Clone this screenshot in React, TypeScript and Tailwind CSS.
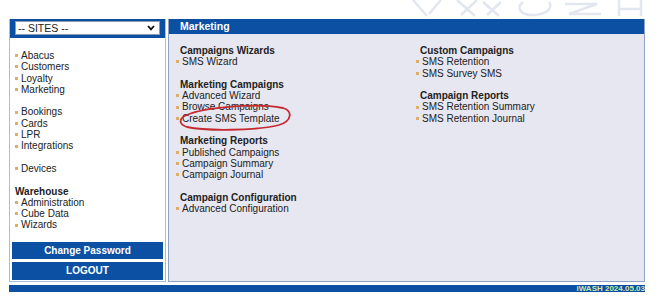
import React from 'react'

const blue = 'bg-[#0c50a3]'

const sideGroups: { title?: string; items: string[] }[] = [
  { items: ['Abacus', 'Customers', 'Loyalty', 'Marketing'] },
  { items: ['Bookings', 'Cards', 'LPR', 'Integrations'] },
  { items: ['Devices'] },
  { title: 'Warehouse', items: ['Administration', 'Cube Data', 'Wizards'] },
]

const leftCol: { title: string; items: string[] }[] = [
  { title: 'Campaigns Wizards', items: ['SMS Wizard'] },
  { title: 'Marketing Campaigns', items: ['Advanced Wizard', 'Browse Campaigns', 'Create SMS Template'] },
  { title: 'Marketing Reports', items: ['Published Campaigns', 'Campaign Summary', 'Campaign Journal'] },
  { title: 'Campaign Configuration', items: ['Advanced Configuration'] },
]

const rightCol: { title: string; items: string[] }[] = [
  { title: 'Custom Campaigns', items: ['SMS Retention', 'SMS Survey SMS'] },
  { title: 'Campaign Reports', items: ['SMS Retention Summary', 'SMS Retention Journal'] },
]

function Item({ label }: { label: string }) {
  return (
    <div className="flex items-center gap-[3px]">
      <span className="h-[3px] w-[3px] shrink-0 bg-[#dcae6a]" />
      <span>{label}</span>
    </div>
  )
}

function Section({ title, items }: { title: string; items: string[] }) {
  return (
    <div className="flex flex-col">
      <div className="pl-[4px] font-bold">{title}</div>
      {items.map((i) => (
        <Item key={i} label={i} />
      ))}
    </div>
  )
}

export default function App() {
  return (
    <div className="relative h-[304px] w-[661px] overflow-hidden bg-white pl-[9px] pt-[19px] font-['Liberation_Sans',Arial,sans-serif] text-[10px] leading-[11.3px] text-[#222]">
      {/* faint logo watermark */}
      <svg className="absolute left-[405px] top-0" width="240" height="18" viewBox="0 0 240 18" fill="none" stroke="#e1e6ef" strokeWidth="2.5">
        <path d="M8 0 L22 16 M36 0 L24 14" />
        <path d="M52 0 L70 16 M72 0 L56 15 M78 2 L94 16 M96 2 L82 15" />
        <path d="M118 2 C110 8 116 16 130 15 C142 14 148 8 144 2" />
        <path d="M160 4 L192 4 L164 14 L196 14" />
        <path d="M214 0 L214 16 M236 0 L236 16 M214 9 L236 9" />
      </svg>

      <div className="flex w-[636px] flex-col">
        <div className="flex h-[263px] gap-[2px]">
          {/* sidebar */}
          <aside className="flex w-[157px] flex-col border border-t-0 border-[#a9bedb] bg-white">
            <div className={`${blue} px-[5px] pb-[3px] pt-[2px]`}>
              <div className="flex h-[14px] items-center justify-between border border-[#8a9bb3] bg-white pl-[2px] pr-[4px] text-[10.5px] leading-none">
                <span>-- SITES --</span>
                <svg width="8" height="6" viewBox="0 0 8 6" fill="none" stroke="#111" strokeWidth="1.8">
                  <path d="M1 1 L4 4.3 L7 1" />
                </svg>
              </div>
            </div>
            <div className="flex flex-1 flex-col gap-[11.3px] pl-[5px] pt-[12px]">
              {sideGroups.map((g, i) => (
                <div key={i} className="flex flex-col">
                  {g.title && <div className="font-bold">{g.title}</div>}
                  {g.items.map((it) => (
                    <Item key={it} label={it} />
                  ))}
                </div>
              ))}
            </div>
            <div className="flex flex-col gap-[3px] px-[1px] pb-[1px]">
              <div className={`${blue} flex h-[17px] items-center justify-center border-x border-white font-bold text-white`}>Change Password</div>
              <div className={`${blue} flex h-[18px] items-center justify-center border-x border-white font-bold text-white`}>LOGOUT</div>
            </div>
          </aside>

          {/* main */}
          <main className="relative flex flex-1 flex-col border border-t-0 border-[#8fa3c2] bg-[#e7e7f1]">
            <div className={`${blue} h-[15px] pl-[11px] text-[10.5px] font-bold leading-[15px] text-white`}>Marketing</div>
            <div className="flex pl-[7px] pt-[11px]">
              <div className="flex w-[240px] flex-col gap-[11.3px]">
                {leftCol.map((s) => (
                  <Section key={s.title} {...s} />
                ))}
              </div>
              <div className="flex flex-col gap-[11.3px]">
                {rightCol.map((s) => (
                  <Section key={s.title} {...s} />
                ))}
              </div>
            </div>
            {/* red annotation ellipse */}
            <svg className="pointer-events-none absolute left-[6px] top-[84px]" width="120" height="30" viewBox="0 0 120 30" fill="none">
              <path
                d="M12 12 C30 4 80 0 108 5 C118 8 117 18 104 22 C80 28 30 28 12 24 C3 21 4 15 12 12 Z"
                stroke="#c62a30"
                strokeWidth="1.8"
              />
            </svg>
          </main>
        </div>

        <div className={`${blue} mt-[3px] flex h-[7px] items-center justify-end text-[8px] font-bold leading-[7px] text-[#cfe6a4]`}>
          iWASH 2024.05.03
        </div>
      </div>
    </div>
  )
}
